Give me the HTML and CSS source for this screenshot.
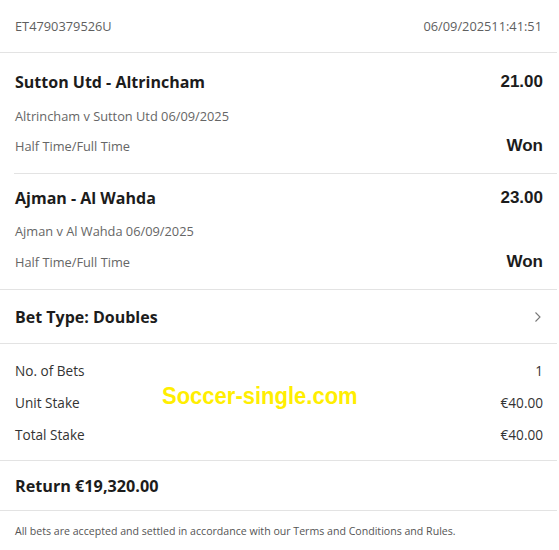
FILE: index.html
```html
<!DOCTYPE html>
<html>
<head>
<meta charset="utf-8">
<link rel="stylesheet" href="styles.css">
</head>
<body>
<div class="receipt">
  <div class="head">
    <span class="ref">ET4790379526U</span>
    <span class="date">06/09/202511:41:51</span>
  </div>
  <div class="selections">
    <div class="sel first">
      <div class="row title"><span class="name">Sutton Utd - Altrincham</span><span class="odds">21.00</span></div>
      <div class="row sub">Altrincham v Sutton Utd 06/09/2025</div>
      <div class="row market"><span>Half Time/Full Time</span><span class="result">Won</span></div>
    </div>
    <div class="sel">
      <div class="row title"><span class="name">Ajman - Al Wahda</span><span class="odds">23.00</span></div>
      <div class="row sub">Ajman v Al Wahda 06/09/2025</div>
      <div class="row market"><span>Half Time/Full Time</span><span class="result">Won</span></div>
    </div>
  </div>
  <div class="bettype">
    <span class="bt-label">Bet Type: Doubles</span>
    <svg class="chev" width="8" height="12" viewBox="0 0 8 12"><path d="M1.5 1.5 L6 6 L1.5 10.5" fill="none" stroke="#777" stroke-width="1.1"/></svg>
  </div>
  <div class="stakes">
    <div class="srow"><span>No. of Bets</span><span>1</span></div>
    <div class="srow"><span>Unit Stake</span><span>€40.00</span></div>
    <div class="srow"><span>Total Stake</span><span>€40.00</span></div>
    <div class="watermark">Soccer-single.com</div>
  </div>
  <div class="return">Return €19,320.00</div>
  <div class="foot">All bets are accepted and settled in accordance with our Terms and Conditions and Rules.</div>
</div>
</body>
</html>
```

FILE: styles.css
```css
html, body {
  margin: 0;
  padding: 0;
  background: #fff;
}
.receipt {
  width: 557px;
  font-family: "Open Sans", "Noto Sans", sans-serif;
  color: #222;
}
.head {
  height: 52px;
  border-bottom: 1px solid #e3e3e3;
  display: flex;
  justify-content: space-between;
  align-items: center;
  padding: 0 15px;
  font-size: 12.8px;
  color: #5f5f5f;
}
.selections {
  border-bottom: 1px solid #e3e3e3;
}
.sel {
  margin-left: 14px;
  padding: 9px 14px 12px 1px;
}
.sel.first {
  padding-top: 14px;
  border-bottom: 1px solid #e3e3e3;
}
.row {
  display: flex;
  justify-content: space-between;
  align-items: center;
  height: 30px;
}
.title .name {
  font-weight: 700;
  font-size: 16px;
  color: #1c1c1c;
}
.odds, .result {
  font-family: "Liberation Sans", Arial, sans-serif;
  font-weight: 700;
  font-size: 17px;
  color: #1c1c1c;
}
.sub {
  margin-top: 4px;
  font-size: 12.8px;
  color: #666;
}
.market {
  font-size: 12.8px;
  color: #666;
}
.sel:not(.first) .sub { margin-top: 3px; }
.sel:not(.first) .market { margin-top: 1px; }
.bettype {
  height: 53px;
  border-bottom: 1px solid #e3e3e3;
  display: flex;
  justify-content: space-between;
  align-items: center;
  padding: 0 15px;
}
.bt-label {
  font-weight: 700;
  font-size: 16px;
  color: #1c1c1c;
}
.stakes {
  position: relative;
  padding: 10px 14px 10px 15px;
  border-bottom: 1px solid #e3e3e3;
}
.srow {
  display: flex;
  justify-content: space-between;
  align-items: center;
  height: 32px;
  font-size: 13.6px;
  color: #333;
}
.watermark {
  position: absolute;
  left: 162px;
  top: 39px;
  font-family: "Liberation Sans", Arial, sans-serif;
  font-weight: 700;
  font-size: 22px;
  color: #ffee00;
  transform: scaleY(1.12);
  white-space: nowrap;
}
.return {
  height: 49px;
  display: flex;
  align-items: center;
  padding: 0 15px;
  font-weight: 700;
  font-size: 16.2px;
  color: #1c1c1c;
  border-bottom: 1px solid #e3e3e3;
}
.foot {
  height: 39px;
  display: flex;
  align-items: center;
  padding: 0 15px;
  font-size: 10.6px;
  color: #555;
}
```
